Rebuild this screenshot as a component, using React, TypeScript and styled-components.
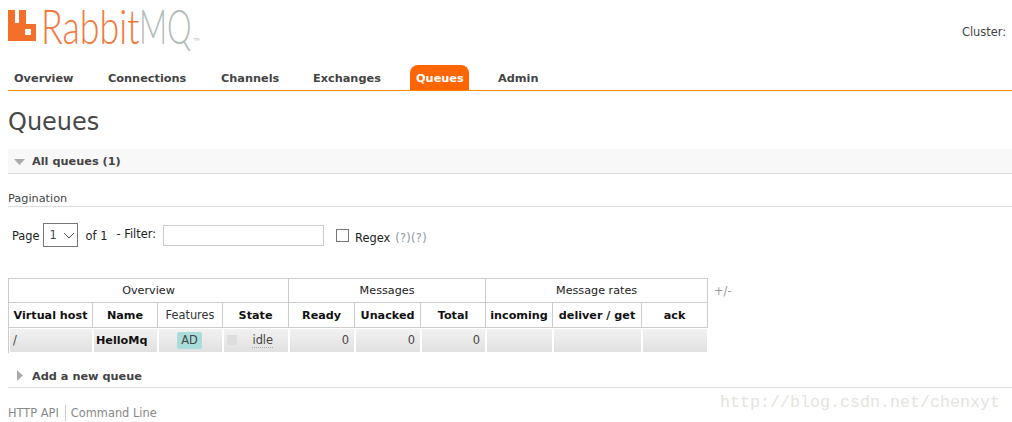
import React from "react";
import styled, { createGlobalStyle } from "styled-components";

const Global = createGlobalStyle`
  html, body { margin: 0; padding: 0; background: #fff; }
  body {
    font-family: "DejaVu Sans", Verdana, sans-serif;
    font-size: 11.4px;
    color: #444;
  }
`;

const Page = styled.div`
  width: 1012px;
  height: 422px;
  padding-left: 8px;
  box-sizing: border-box;
  overflow: hidden;
  position: relative;
`;

const Header = styled.div`
  height: 65px;
  display: flex;
  justify-content: space-between;
  box-sizing: border-box;
`;

const Logo = styled.div`
  display: flex;
  align-items: flex-start;
  height: 55px;
`;

const LogoMark = styled.svg`
  width: 28px;
  height: 31px;
  margin-top: 10px;
  margin-right: 5px;
  flex: none;
`;

const LogoWord = styled.span<{ $grey?: boolean }>`
  display: block;
  flex: none;
  width: max-content;
  font-family: "Lato", "Liberation Sans", sans-serif;
  font-weight: 300;
  font-size: 48px;
  line-height: 58px;
  margin-top: -3px;
  white-space: nowrap;
  transform-origin: left top;
  margin-right: ${(p) => (p.$grey ? "-24px" : "-34px")};
  transform: scaleX(${(p) => (p.$grey ? 0.645 : 0.745)});
  color: ${(p) => (p.$grey ? "#b0bdb9" : "#f4773a")};
`;

const Trademark = styled.span`
  font-size: 4px;
  color: #b5bfbc;
  margin-top: 37px;
  margin-left: -3px;
`;

const Cluster = styled.div`
  padding-top: 25px;
  padding-right: 6px;
  font-size: 11.4px;
`;

const Tabs = styled.nav`
  display: flex;
  height: 26px;
  border-bottom: 1px solid #ff8a00;
  box-sizing: border-box;
`;

const Tab = styled.a<{ $active?: boolean; $w: number; $gap?: number }>`
  width: ${(p) => p.$w}px;
  margin-left: ${(p) => p.$gap ?? 0}px;
  box-sizing: border-box;
  padding: 7px 6px 0;
  font-weight: bold;
  font-size: 11.3px;
  color: ${(p) => (p.$active ? "#fff" : "#444")};
  background: ${(p) => (p.$active ? "#f60" : "transparent")};
  border-radius: ${(p) => (p.$active ? "8px 8px 0 0" : "0")};
  white-space: nowrap;
`;

const Title = styled.h1`
  margin: 17px 0 0;
  height: 41px;
  font-weight: normal;
  font-size: 24px;
  line-height: 28px;
  color: #484848;
`;

const SectionBar = styled.div`
  height: 25px;
  box-sizing: border-box;
  background: #f8f8f8;
  border-bottom: 1px solid #ddd;
  display: flex;
  align-items: center;
  gap: 7px;
  padding-left: 6px;
  font-weight: bold;
  font-size: 11.3px;
`;

const Triangle = styled.svg`
  width: 11px;
  height: 11px;
  flex: none;
`;

const Pagination = styled.div`
  margin-top: 18px;
  height: 14px;
  border-bottom: 1px solid #ddd;
  font-size: 11.3px;
  line-height: 13px;
`;

const Filters = styled.div`
  margin-top: 16px;
  height: 24px;
  display: flex;
  align-items: center;
  padding-left: 4px;
  color: #222;
  font-size: 11.4px;
`;

const PageLabel = styled.span`
  margin-top: 2px;
`;

const Select = styled.div`
  width: 35px;
  height: 24px;
  box-sizing: border-box;
  border: 1px solid #767676;
  margin-left: 3px;
  margin-right: 8px;
  display: flex;
  align-items: center;
  padding-left: 6px;
  gap: 6px;
  color: #484848;
`;

const FilterLabel = styled.span`
  margin-left: 9px;
  margin-top: -3px;
`;

const TextInput = styled.div`
  width: 161px;
  height: 21px;
  box-sizing: border-box;
  border: 1px solid #ccc;
  margin-left: 7px;
`;

const CheckBox = styled.div`
  width: 11px;
  height: 11px;
  border: 1px solid #767676;
  margin-left: 12px;
`;

const RegexLabel = styled.span`
  margin-left: 6px;
  margin-top: 5px;
`;

const Help = styled.span`
  color: #8a9aa5;
  margin-left: 5px;
  margin-top: 5px;
  letter-spacing: 0.3px;
`;

const TableRow = styled.div`
  margin-top: 31px;
  display: flex;
  align-items: flex-start;
`;

const QueueTable = styled.table`
  border-collapse: collapse;
  table-layout: fixed;
  width: 699px;
  font-size: 11.4px;
`;

const GroupCell = styled.th`
  border: 1px solid #ccc;
  height: 23px;
  padding: 0;
  font-weight: normal;
  font-size: 11.2px;
  color: #222;
`;

const HeadCell = styled.th<{ $plain?: boolean }>`
  border: 1px solid #ccc;
  height: 24px;
  padding: 0;
  font-weight: ${(p) => (p.$plain ? "normal" : "bold")};
  font-size: ${(p) => (p.$plain ? "11.4px" : "11.2px")};
  color: ${(p) => (p.$plain ? "#333" : "#111")};
  white-space: nowrap;
`;

const DataCell = styled.td<{ $align?: string; $bold?: boolean }>`
  border: 1px solid #ccc;
  outline: 1px solid #fff;
  outline-offset: -1px;
  height: 24px;
  padding: 0 5px 0 ${(p) => (p.$bold ? "3px" : "4px")};
  text-align: ${(p) => p.$align ?? "left"};
  font-weight: ${(p) => (p.$bold ? "bold" : "normal")};
  color: ${(p) => (p.$bold ? "#111" : "#444")};
  background: linear-gradient(#f2f2f2, #e0e0e0);
  font-size: ${(p) => (p.$bold ? "11.2px" : "11.4px")};
`;

const Badge = styled.span`
  display: inline-block;
  background: #aadcdc;
  border-radius: 2px;
  padding: 1px 4px;
  line-height: 15px;
`;

const StateInner = styled.div`
  display: flex;
  align-items: center;
  justify-content: space-between;
  padding-right: 10px;
`;

const StateDot = styled.span`
  width: 10px;
  height: 10px;
  background: #ddd;
`;

const Idle = styled.span`
  border-bottom: 1px dotted #aaa;
  line-height: 13px;
  margin-top: 2px;
`;

const PlusMinus = styled.span`
  margin-left: 6px;
  margin-top: 6px;
  color: #999;
  font-size: 11.4px;
`;

const AddBar = styled.div`
  margin-top: 15px;
  height: 20px;
  padding-top: 2px;
  box-sizing: border-box;
  border-bottom: 1px solid #ddd;
  display: flex;
  align-items: flex-start;
  gap: 6px;
  padding-left: 7px;
  font-weight: bold;
  font-size: 11.3px;
`;

const Footer = styled.div`
  margin-top: 17px;
  display: flex;
  align-items: center;
  color: #888;
  font-size: 11.4px;
`;

const FooterLink = styled.span<{ $divider?: boolean }>`
  line-height: 16px;
  ${(p) => (p.$divider ? "border-left: 1px solid #ccc; margin-left: 6px; padding-left: 5px;" : "")}
`;

const Watermark = styled.span`
  position: absolute;
  left: 720px;
  top: 393px;
  font-family: "Liberation Mono", "DejaVu Sans Mono", monospace;
  font-size: 16.67px;
  color: #e4e4de;
  white-space: nowrap;
`;

const columns = [84, 65, 65, 66, 66, 66, 65, 67, 89, 66];

export default function App() {
  return (
    <Page>
      <Global />
      <Header>
        <Logo>
          <LogoMark viewBox="0 0 28 31">
            <path
              fill="#f4702a"
              fillRule="evenodd"
              d="M0 0h7v13h4V0h7v14h10v17H0zM17 19v6h6v-6z"
            />
          </LogoMark>
          <LogoWord>Rabbit</LogoWord>
          <LogoWord $grey>MQ</LogoWord>
          <Trademark>TM</Trademark>
        </Logo>
        <Cluster>Cluster:</Cluster>
      </Header>

      <Tabs>
        <Tab $w={94}>Overview</Tab>
        <Tab $w={113}>Connections</Tab>
        <Tab $w={92}>Channels</Tab>
        <Tab $w={103}>Exchanges</Tab>
        <Tab $w={59} $active>Queues</Tab>
        <Tab $w={60} $gap={23}>Admin</Tab>
      </Tabs>

      <Title>Queues</Title>

      <SectionBar>
        <Triangle viewBox="0 0 11 11"><path d="M0 3h11L5.5 9z" fill="#aaa" /></Triangle>
        All queues (1)
      </SectionBar>

      <Pagination>Pagination</Pagination>

      <Filters>
        <PageLabel>Page</PageLabel>
        <Select>
          1
          <svg width="12" height="7" viewBox="0 0 12 7"><path d="M1 1l5 5 5-5" fill="none" stroke="#555" /></svg>
        </Select>
        <PageLabel>of 1</PageLabel>
        <FilterLabel>- Filter:</FilterLabel>
        <TextInput />
        <CheckBox />
        <RegexLabel>Regex</RegexLabel>
        <Help>(?)(?)</Help>
      </Filters>

      <TableRow>
        <QueueTable>
          <colgroup>
            {columns.map((w, i) => <col key={i} width={w} />)}
          </colgroup>
          <thead>
            <tr>
              <GroupCell colSpan={4}>Overview</GroupCell>
              <GroupCell colSpan={3}>Messages</GroupCell>
              <GroupCell colSpan={3}>Message rates</GroupCell>
            </tr>
            <tr>
              <HeadCell>Virtual host</HeadCell>
              <HeadCell>Name</HeadCell>
              <HeadCell $plain>Features</HeadCell>
              <HeadCell>State</HeadCell>
              <HeadCell>Ready</HeadCell>
              <HeadCell>Unacked</HeadCell>
              <HeadCell>Total</HeadCell>
              <HeadCell>incoming</HeadCell>
              <HeadCell>deliver / get</HeadCell>
              <HeadCell>ack</HeadCell>
            </tr>
          </thead>
          <tbody>
            <tr>
              <DataCell>/</DataCell>
              <DataCell $bold>HelloMq</DataCell>
              <DataCell $align="center"><Badge>AD</Badge></DataCell>
              <DataCell><StateInner><StateDot /><Idle>idle</Idle></StateInner></DataCell>
              <DataCell $align="right">0</DataCell>
              <DataCell $align="right">0</DataCell>
              <DataCell $align="right">0</DataCell>
              <DataCell />
              <DataCell />
              <DataCell />
            </tr>
          </tbody>
        </QueueTable>
        <PlusMinus>+/-</PlusMinus>
      </TableRow>

      <AddBar>
        <Triangle viewBox="0 0 11 11"><path d="M2 0l6 5.5L2 11z" fill="#aaa" /></Triangle>
        Add a new queue
      </AddBar>

      <Footer>
        <FooterLink>HTTP API</FooterLink>
        <FooterLink $divider>Command Line</FooterLink>
      </Footer>

      <Watermark>http://blog.csdn.net/chenxyt</Watermark>
    </Page>
  );
}
